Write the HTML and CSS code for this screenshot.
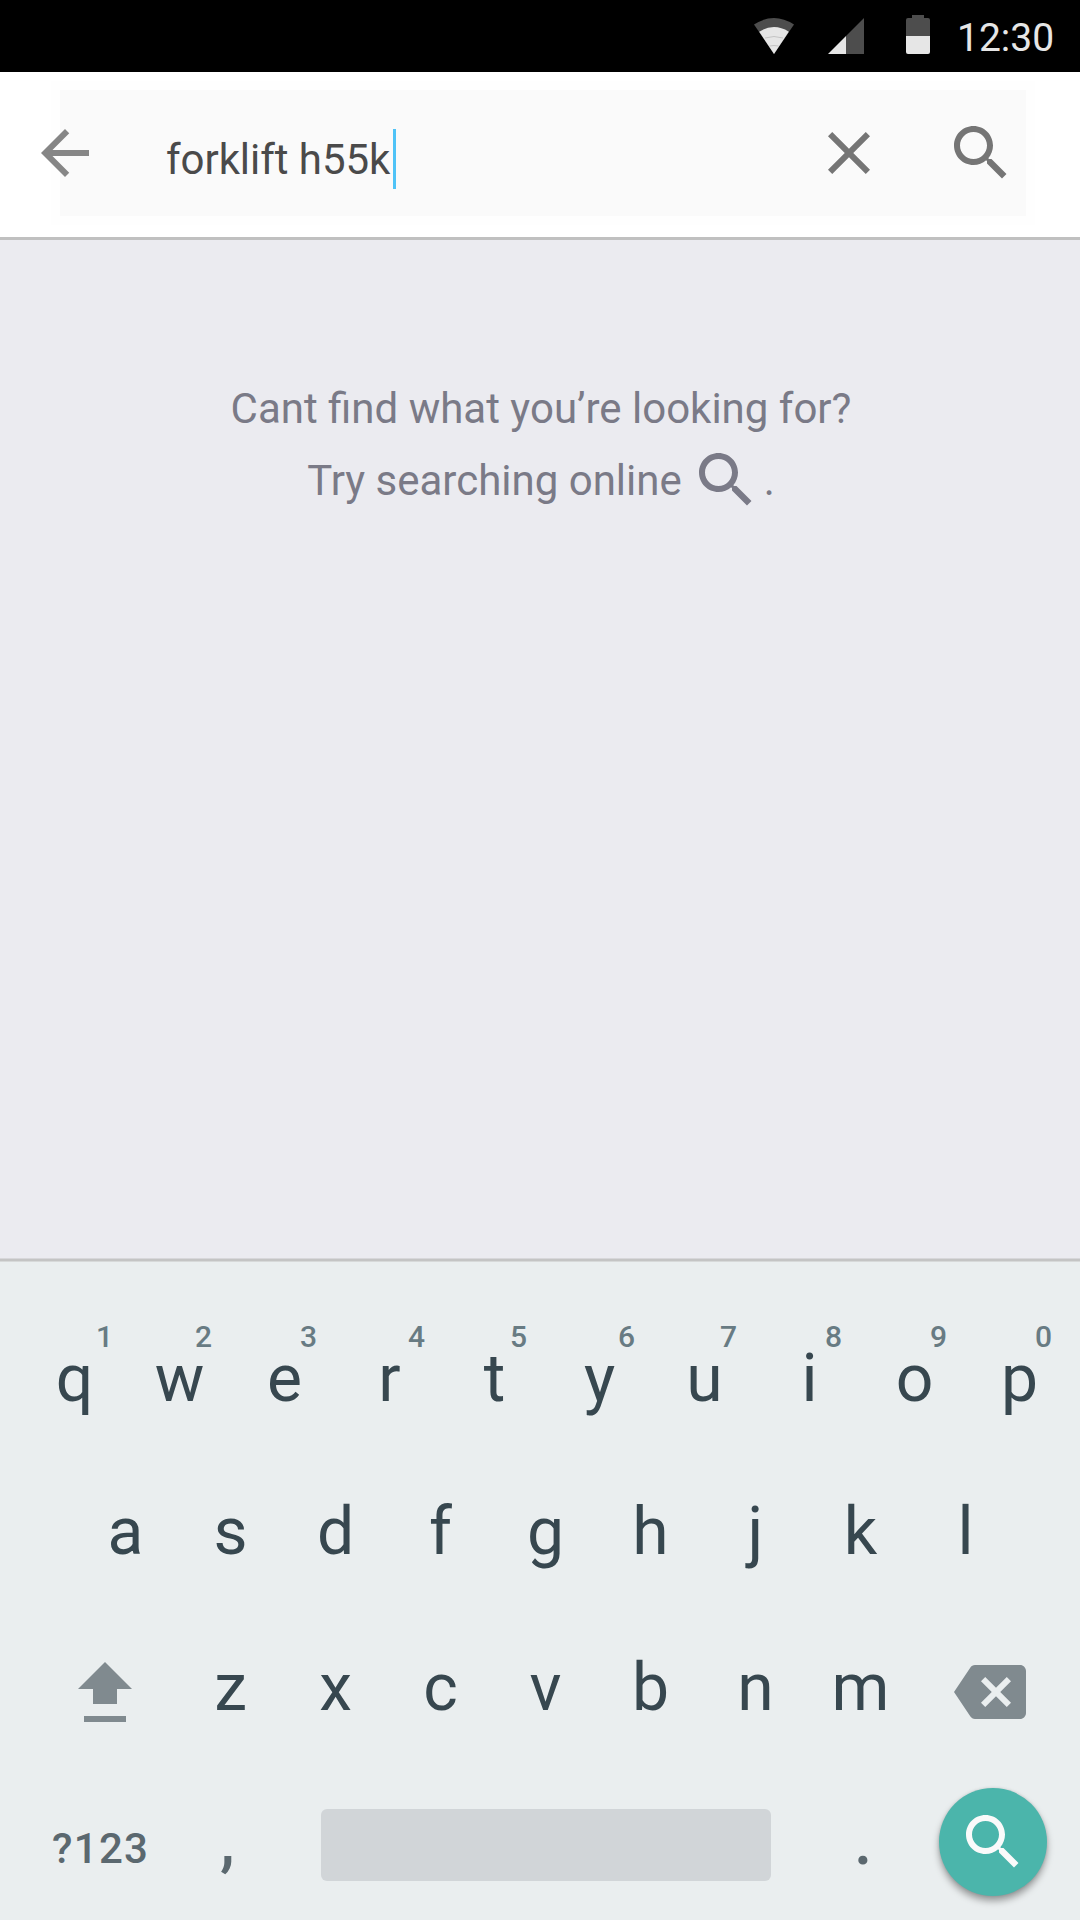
FILE: index.html
```html
<!DOCTYPE html>
<html lang="en">
<head>
<meta charset="utf-8">
<title>Search</title>
<link rel="stylesheet" href="styles.css">
</head>
<body>
<svg class="sprite" aria-hidden="true">
  <symbol id="search" viewBox="0 0 24 24"><path d="M15.5 14h-.79l-.28-.27C15.41 12.59 16 11.11 16 9.5 16 5.91 13.09 3 9.5 3S3 5.91 3 9.5 5.91 16 9.5 16c1.61 0 3.09-.59 4.23-1.57l.27.28v.79l5 4.99L20.49 19l-4.99-5zm-6 0C7.01 14 5 11.99 5 9.5S7.01 5 9.5 5 14 7.01 14 9.5 11.99 14 9.5 14z"/></symbol>
</svg>
<div class="screen">
  <div class="status">
    <svg class="wifi" viewBox="0 0 40 36"><path class="dim" d="M0 6.5Q20-6.5 40 6.5L20 36Z"/><path class="lit" d="M5.200 13.700Q20 4.500 34.800 13.700L20 36Z"/><path class="arc" d="M11 20Q20 17 29 20M15.500 28Q20 27 24.500 28"/></svg>
    <svg class="signal" viewBox="0 0 36 36"><path class="dim" d="M36 0V36H18V18Z"/><path class="lit" d="M18 18V36H0Z"/></svg>
    <svg class="battery" viewBox="0 0 24 39"><path class="dim" d="M6 0H18V3H22Q24 3 24 5V21H0V5Q0 3 2 3H6Z"/><path class="lit" d="M0 21H24V37Q24 39 22 39H2Q0 39 0 37Z"/></svg>
    <span class="clock">12:30</span>
  </div>
  <header class="bar">
    <svg class="icon back" viewBox="0 0 24 24"><path d="M20 11H7.830l5.590-5.590L12 4l-8 8 8 8 1.410-1.410L7.830 13H20v-2z"/></svg>
    <div class="field">
      <span class="query">forklift h55k</span><span class="caret"></span>
      <svg class="icon clear" viewBox="0 0 24 24"><path d="M19 6.410L17.590 5 12 10.590 6.410 5 5 6.410 10.590 12 5 17.590 6.410 19 12 13.410 17.590 19 19 17.590 13.410 12z"/></svg>
      <svg class="icon find"><use href="#search"/></svg>
    </div>
  </header>
  <main class="empty">
    <p class="line first">Cant find what you’re looking for?</p>
    <p class="line try"><span>Try searching online</span><svg class="icon online"><use href="#search"/></svg><span>.</span></p>
  </main>
  <section class="keyboard">
    <div class="row numbers">
      <div class="key">q<sup class="one">1</sup></div><div class="key">w<sup>2</sup></div><div class="key">e<sup>3</sup></div><div class="key">r<sup class="far">4</sup></div><div class="key">t<sup>5</sup></div><div class="key">y<sup class="far">6</sup></div><div class="key">u<sup>7</sup></div><div class="key">i<sup>8</sup></div><div class="key">o<sup>9</sup></div><div class="key">p<sup>0</sup></div>
    </div>
    <div class="row home">
      <div class="key">a</div><div class="key">s</div><div class="key">d</div><div class="key">f</div><div class="key">g</div><div class="key">h</div><div class="key">j</div><div class="key">k</div><div class="key">l</div>
    </div>
    <div class="row lower">
      <svg class="shift" viewBox="0 0 54 60"><path d="M27 0L54 27H39V42H15V27H0ZM6 54H48V60H6Z"/></svg>
      <div class="key">z</div><div class="key">x</div><div class="key">c</div><div class="key">v</div><div class="key">b</div><div class="key">n</div><div class="key">m</div>
      <svg class="icon erase" viewBox="0 0 24 24"><path d="M22 3H7c-.69 0-1.230.350-1.590.880L0 12l5.410 8.110c.360.530.900.890 1.590.890h15c1.100 0 2-.9 2-2V5c0-1.100-.9-2-2-2zm-3 12.590L17.590 17 14 13.410 10.410 17 9 15.590 12.590 12 9 8.410 10.410 7 14 10.590 17.590 7 19 8.410 15.410 12 19 15.590z"/></svg>
    </div>
    <div class="row bottom">
      <span class="mode">?123</span>
      <span class="mark comma">,</span>
      <div class="space"></div>
      <span class="mark dot">.</span>
      <div class="go"><svg class="icon"><use href="#search"/></svg></div>
    </div>
  </section>
</div>
</body>
</html>
```
FILE: styles.css
```css
* { box-sizing: border-box; }
body { margin: 0; font-family: Roboto, "Liberation Sans", sans-serif; }
svg { display: block; flex: none; }
.sprite { display: none; }
.screen { width: 1080px; height: 1920px; display: flex; flex-direction: column; overflow: hidden; }
.icon { width: 72px; height: 72px; fill: currentColor; }

.status { height: 72px; background: #000; display: flex; padding-left: 754px; }
.dim { fill: #4d4d4d; }
.lit { fill: #e6e6e6; }
.arc { fill: none; stroke: #c4c4c4; stroke-width: 1; }
.wifi { width: 40px; height: 36px; margin-top: 18px; }
.signal { width: 36px; height: 36px; margin: 18px 0 0 34px; }
.battery { width: 24px; height: 39px; margin: 15px 0 0 42px; }
.clock { margin: 14px 0 0 27px; font-size: 39px; line-height: 48px; color: #e6e6e6; }

.bar { height: 168px; background: #fff; border-bottom: 3px solid #c0c0c0; display: flex; padding: 18px 0 0 29px; }
.back { position: relative; z-index: 1; margin-top: 27px; color: #868686; }
.field { width: 966px; height: 126px; margin-left: -41px; background: #fafafa; box-shadow: 0 0 0 9px #fefefe; display: flex; color: #757575; }
.query { margin: 46px 0 0 106px; width: 227px; font-size: 42px; line-height: 48px; letter-spacing: -0.05px; white-space: nowrap; color: #4a4a4a; }
.caret { width: 3px; height: 60px; margin-top: 39px; background: #4fc3f7; }
.clear { margin: 27px 0 0 417px; }
.find { margin: 27px 0 0 60px; }

.empty { height: 1019px; background: #ebebf0; border-bottom: 1px solid #d7d7da; padding-top: 133px; color: #7a7a87; font-size: 42px; line-height: 72px; }
.line { margin: 0; height: 72px; text-align: center; }
.first { padding-left: 2px; }
.try { display: flex; justify-content: center; padding-left: 2px; white-space: nowrap; }
.online { margin: -1px 2px 0 8px; }

.keyboard { flex: 1; background: #eaeeef; border-top: 2px solid #c4c4c4; box-shadow: inset 0 1px #d7d9d9; padding-top: 1px; color: #37474f; }
.row { display: flex; }
.key { width: 105px; flex: none; text-align: center; font-size: 66px; line-height: 78px; position: relative; }
.numbers { height: 152px; padding: 78px 0 0 22px; }
.home { height: 156px; padding: 79px 0 0 73px; }
.lower { height: 156px; padding-left: 78px; }
.lower .key { margin-top: 79px; }
sup { position: absolute; left: 68px; top: -21px; font-size: 30px; line-height: 36px; font-weight: 500; color: #687b83; }
.far { left: 71px; }
.one { left: 74px; }
.shift { width: 54px; height: 60px; margin: 92px 46px 0 0; fill: #808a8f; }
.erase { margin: 86px 0 0 41px; color: #808a8f; }
.bottom { color: #5b686f; font-weight: 500; padding-top: 62px; }
.mode { width: 100px; margin: 37px 0 0 52px; font-size: 42px; line-height: 48px; letter-spacing: 1.3px; }
.mark { font-size: 66px; line-height: 78px; margin-top: 15px; }
.comma { width: 101px; margin-left: 68px; }
.space { width: 450px; height: 72px; margin-top: 21px; border-radius: 6px; background: #d1d5d8; }
.dot { width: 85px; margin-left: 83px; }
.go { width: 108px; height: 108px; border-radius: 50%; background: #4bb5ab; color: #fafafa; padding: 18px; box-shadow: 0 0 3px rgba(0,0,0,.12), 0 5px 7px rgba(0,0,0,.35); }
```
